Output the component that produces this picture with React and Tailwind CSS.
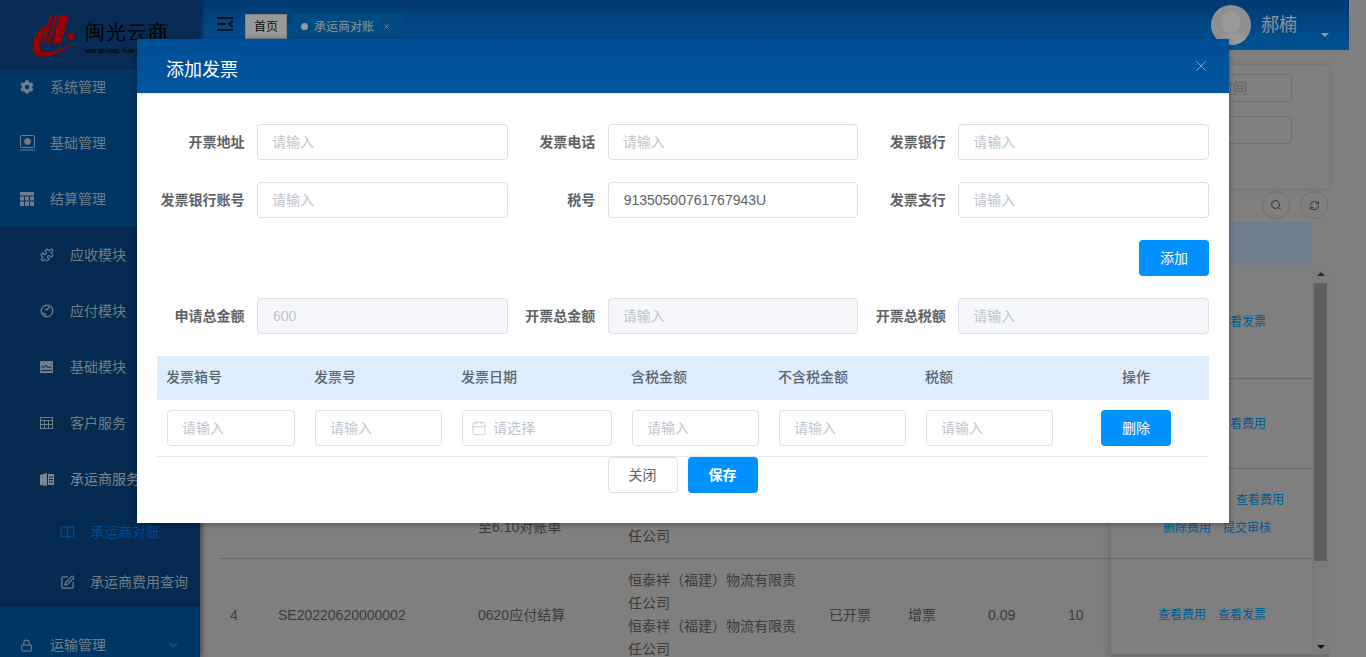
import React from 'react';
import { ChevronDown, Lock, Puzzle, SquarePen, BookOpen, X, Search, RefreshCw, Calendar } from 'lucide-react';
import { FaCog } from 'react-icons/fa';

const font = { fontFamily: '"Liberation Sans", "Noto Sans CJK SC", sans-serif' };

// sidebar glyphs that no package has in this shape
const BaseIcon = () => (
  <svg className="w-[15px] h-[16px]" viewBox="0 0 15 16" fill="none" stroke="currentColor">
    <rect x="0.5" y="0.5" width="14" height="12" rx="1" />
    <circle cx="7.5" cy="6.5" r="3" fill="currentColor" />
    <path d="M0 15h15" />
  </svg>
);
const GridIcon = () => (
  <svg className="w-[14px] h-[14px]" viewBox="0 0 14 14" fill="currentColor">
    <rect width="14" height="3.500" />
    <rect y="4.500" width="4" height="4" />
    <rect x="5" y="4.500" width="4" height="4" />
    <rect x="10" y="4.500" width="4" height="4" />
    <rect y="9.500" width="4" height="4.500" />
    <rect x="5" y="9.500" width="4" height="4.500" />
    <rect x="10" y="9.500" width="4" height="4.500" />
  </svg>
);
const ClockIcon = () => (
  <svg className="w-[14px] h-[14px]" viewBox="0 0 14 14" fill="none" stroke="currentColor" strokeWidth="1.3">
    <circle cx="7" cy="7" r="5.8" />
    <path d="M9.5 2.5 7 6 5 5M2 9l3 1 1 3" />
  </svg>
);
const PictureIcon = () => (
  <svg className="w-[13px] h-[12px]" viewBox="0 0 13 12">
    <rect width="13" height="12" fill="currentColor" />
    <path d="M1.5 6h3l1.5-2 2 3 1-1h2.500" fill="none" stroke="#084685" />
    <path d="M1 9.500h11" stroke="#084685" />
  </svg>
);
const TableIcon = () => (
  <svg className="w-[13px] h-[12px]" viewBox="0 0 13 12" fill="none" stroke="currentColor">
    <rect x="0.500" y="0.500" width="12" height="11" />
    <path d="M0 3.500h13M0 7.500h13M4.500 3.500V12M8.500 3.500V12" />
  </svg>
);
const HalfBookIcon = () => (
  <svg className="w-[14px] h-[13px]" viewBox="0 0 14 13">
    <path d="M0 2 7 0v13l-7-1z" fill="currentColor" />
    <path d="M8 1h6v11H8z" fill="currentColor" />
    <path d="M9 4h4M9 6.500h4M9 9h4" stroke="#084685" />
  </svg>
);

const Logo = () => (
  <div className="h-[70px] bg-[#0d498e] flex items-start pl-[32px] pt-[15px] shrink-0">
    <svg className="w-[44px] h-[44px]" viewBox="0 0 44 44">
      <path d="M18 0h3l-8 28h-3zM23 0h3l-8 28h-3zM28 0h9l-8 28h-9z" fill="#fa0000" />
      <path d="M13 10C3 18-3 32 3 39c6 6 26 2 40-14-12 10-28 15-33 11C6 32 8 22 15 13z" fill="#fa0000" />
      <circle cx="39" cy="21" r="3.500" fill="#fa0000" />
    </svg>
    <div className="ml-[9px] mt-[5px] text-black whitespace-nowrap">
      <div className="text-[20px] leading-[26px] tracking-[1px] font-serif">闽光云商</div>
      <div className="text-[6px] leading-[8px] mt-[1px] font-bold">MIN QUANG YUN SHANG</div>
    </div>
  </div>
);

const SideItem = ({ icon, label, indent = 'pl-[20px]', gap = 'w-[30px]', color = 'text-[#b7d0e1]', h = 'h-[56px]' }) => (
  <div className={`${h} shrink-0 flex items-center ${indent} ${color} text-[14px] whitespace-nowrap`}>
    <span className={`${gap} shrink-0 flex items-center`}>{icon}</span>
    {label}
  </div>
);

const Sidebar = () => (
  <div className="relative w-[200px] shrink-0 h-full flex flex-col bg-[#005aa7] overflow-hidden shadow-[2px_0_5px_rgba(0,20,60,0.5)]" style={font}>
    <Logo />
    <SideItem icon={<FaCog size={14} />} label="系统管理" h="h-[45px] pb-[11px]" />
    <SideItem icon={<BaseIcon />} label="基础管理" />
    <SideItem icon={<GridIcon />} label="结算管理" />
    <div className="bg-[#084685] flex flex-col shrink-0">
      <SideItem icon={<Puzzle size={14} />} label="应收模块" indent="pl-[40px]" />
      <SideItem icon={<ClockIcon />} label="应付模块" indent="pl-[40px]" />
      <SideItem icon={<PictureIcon />} label="基础模块" indent="pl-[40px]" />
      <SideItem icon={<TableIcon />} label="客户服务" indent="pl-[40px]" />
      <SideItem icon={<HalfBookIcon />} label="承运商服务" indent="pl-[40px]" color="text-[#cfe0ea]" />
      <SideItem icon={<BookOpen size={15} />} label="承运商对账" indent="pl-[60px]" color="text-[#0080f0]" h="h-[50px]" />
      <SideItem icon={<SquarePen size={15} />} label="承运商费用查询" indent="pl-[60px]" h="h-[50px]" />
    </div>
    <div className="h-[10px] shrink-0" />
    <div className="h-[56px] shrink-0 flex items-center pl-[20px] text-[#b7d0e1] text-[14px]">
      <span className="w-[30px] shrink-0 flex items-center"><Lock size={13} /></span>
      运输管理
      <ChevronDown size={14} className="ml-auto mr-[20px] opacity-40" />
    </div>
  </div>
);

const Header = () => (
  <div className="h-[50px] mr-[17px] shrink-0 bg-gradient-to-b from-[#0060c0] to-[#008df8] flex items-start pl-[17px] text-[12px]" style={font}>
    <svg className="w-[16px] h-[14px] mt-[17px] text-black" viewBox="0 0 16 14" fill="none" stroke="currentColor" strokeWidth="1.600">
      <path d="M0 1h16M0 7h9M0 13h16M16 4l-4 3 4 3" />
    </svg>
    <div className="ml-[12px] mt-[14px] w-[42px] h-[25px] border border-[#ddd] bg-white flex items-center justify-center text-[#222]">首页</div>
    <div className="ml-[5px] mt-[14px] w-[111px] h-[25px] bg-[#007dd8] flex items-center pl-[9px] text-[#e6f0f5]">
      <span className="w-[7px] h-[7px] rounded-full bg-white mr-[6px]" />
      承运商对账
      <X size={7} className="ml-[9px]" strokeWidth={3} />
    </div>
    <div className="ml-auto mr-[98px] mt-[5px] w-[40px] h-[40px] rounded-full bg-[#f0f0f0] overflow-hidden relative">
      <div className="absolute left-[11px] top-[6px] w-[18px] h-[22px] rounded-full bg-white" />
      <div className="absolute left-[3px] top-[29px] w-[34px] h-[20px] rounded-full bg-white" />
    </div>
  </div>
);

const columns = 'grid-cols-[58px_200px_150px_201px_79px_80px_80px_43px_201px]';

const Rows = [
  { h: 'h-[114px]', right: <div className="pl-[107px]">查看发票</div> },
  { h: 'h-[90px]', right: <div className="pl-[107px]">查看费用</div> },
  {
    h: 'h-[90px]',
    mid: ['2022.6.1', '至6.10对账单'],
    company: ['恒泰祥（福建）物流有限责', '恒泰祥（福建）', '任公司'],
    right: (
      <div className="flex flex-col items-end pr-[41px] gap-[10px]">
        <span className="translate-x-[13px]">查看费用</span>
        <span className="flex gap-[12px]"><span>删除费用</span><span>提交审核</span></span>
      </div>
    ),
  },
];

const Content = () => (
  <div className="flex-1 min-w-0 relative pl-[20px] pr-[37px] text-[14px] text-[#666]" style={font}>
    {/* search card */}
    <div className="mt-[15px] h-[123px] rounded shadow-[0_0_6px_rgba(0,0,0,0.15)] flex flex-col items-end pt-[9px] pr-[37px] gap-[14px]">
      <div className="w-[120px] h-[28px] border border-[#b8b8b8] rounded flex items-center pl-[46px] text-[#a8a8a8]">时间</div>
      <div className="w-[120px] h-[28px] border border-[#b8b8b8] rounded" />
    </div>
    <div className="h-[34px] flex items-center justify-end gap-[10px] pr-[1px]">
      <span className="w-[28px] h-[28px] rounded-full border border-[#b8b8b8] flex items-center justify-center text-[#555]"><Search size={12} /></span>
      <span className="w-[28px] h-[28px] rounded-full border border-[#b8b8b8] flex items-center justify-center text-[#555]"><RefreshCw size={11} /></span>
    </div>
    {/* table */}
    <div className="h-[43px] mr-[17px] bg-[#b7d0e9]" />
    <div className="flex h-[392px] overflow-hidden relative">
      <div className="flex-1 min-w-0">
        {Rows.map((r, i) => (
          <div key={i} className={`${r.h} grid ${columns} items-center border-b border-[#afafaf]`}>
            <span /><span />
            <div className="leading-[26px]">{r.mid && r.mid.map((t) => <div key={t}>{t}</div>)}</div>
            <div className="leading-[23px]">{r.company && r.company.map((t) => <div key={t}>{t}</div>)}</div>
            <span /><span /><span /><span />
            <div className="text-[12px] text-[#0099f0]">{r.right}</div>
          </div>
        ))}
        <div className={`h-[112px] grid ${columns} items-center`}>
          <span className="pl-[10px]">4</span>
          <span>SE20220620000002</span>
          <span>0620应付结算</span>
          <div className="leading-[23px] pr-[20px]">
            <div>恒泰祥（福建）物流有限责任公司</div>
            <div>恒泰祥（福建）物流有限责任公司</div>
          </div>
          <span>已开票</span>
          <span>增票</span>
          <span>0.09</span>
          <span>10</span>
          <div className="text-[12px] text-[#0099f0] pl-[47px] flex gap-[12px]"><span>查看费用</span><span>查看发票</span></div>
        </div>
      </div>
      <div className="w-[17px] shrink-0 bg-[#d0d0d0] flex flex-col items-center">
        <span className="mt-[7px] w-0 h-0 border-x-[4px] border-x-transparent border-b-[4px] border-b-[#444]" />
        <div className="w-[13px] h-[278px] mt-[7px] bg-[#9e9e9e]" />
        <span className="mt-auto mb-[8px] w-0 h-0 border-x-[4px] border-x-transparent border-t-[4px] border-t-[#222]" />
      </div>
      <div className="absolute right-[17px] top-0 bottom-0 w-[201px] shadow-[-3px_0_6px_rgba(0,0,0,0.12)]" />
      <div className="absolute right-0 bottom-0 w-[218px] h-[3px] bg-[#bbb]" />
    </div>
  </div>
);

const Field = ({ label, value, placeholder = '请输入', disabled }) => (
  <div className="flex items-center h-[36px]">
    <label className="w-[100px] shrink-0 pr-[12.5px] text-right text-[14px] font-bold text-[#606266] whitespace-nowrap">{label}</label>
    <input
      readOnly
      disabled={disabled}
      value={value || ''}
      placeholder={placeholder}
      className={`w-full h-[36px] ${value ? 'px-[15px]' : 'px-[14px]'} text-[14px] rounded border border-[#dcdfe6] outline-none placeholder:text-[#c0c4cc] ${
        disabled ? 'bg-[#f5f7fa] text-[#c0c4cc]' : 'bg-white text-[#606266]'
      }`}
      style={font}
    />
  </div>
);

const CellInput = ({ placeholder = '请输入' }) => (
  <input
    readOnly
    placeholder={placeholder}
    className="w-full h-[36px] px-[14px] text-[14px] rounded border border-[#dcdfe6] outline-none bg-white placeholder:text-[#c0c4cc]"
    style={font}
  />
);

const Modal = () => (
  <div className="w-[1092px] h-[484px] mt-[39px] mx-auto bg-white shadow-[0_1px_6px_rgba(0,0,0,0.35)] flex flex-col" style={font}>
    <div className="h-[55px] shrink-0 bg-gradient-to-b from-[#004e97] to-[#00569e] border-b border-[#e4e7ed] flex items-center pl-[29px] pr-[19px] text-white">
      <span className="text-[18px] mt-[8px]">添加发票</span>
      <X size={18} strokeWidth={1.1} className="ml-auto text-[#a8bccc]" />
    </div>
    <div className="pl-[20px] pr-[20px] pt-[30px]">
      <div className="grid grid-cols-3 gap-y-[22px]">
        <Field label="开票地址" />
        <Field label="发票电话" />
        <Field label="发票银行" />
        <Field label="发票银行账号" />
        <Field label="税号" value="91350500761767943U" />
        <Field label="发票支行" />
      </div>
      <div className="flex justify-end mt-[22px]">
        <button className="w-[70px] h-[36px] rounded bg-[#0091ff] text-white text-[14px]">添加</button>
      </div>
      <div className="grid grid-cols-3 mt-[22px]">
        <Field label="申请总金额" value="600" disabled />
        <Field label="开票总金额" disabled />
        <Field label="开票总税额" disabled />
      </div>
      {/* invoice table */}
      <div className="mt-[22px] grid grid-cols-[148px_147px_170px_147px_147px_147px_146px] h-[44px] items-center bg-[#deeefe] border-b border-[#e4e7ed] text-[14px] font-medium text-[#5a6672]">
        {['发票箱号', '发票号', '发票日期', '含税金额', '不含税金额', '税额'].map((t) => (
          <span key={t} className="pl-[9px]">{t}</span>
        ))}
        <span className="text-center">操作</span>
      </div>
      <div className="grid grid-cols-[148px_147px_170px_147px_147px_147px_146px] h-[57px] items-center border-b border-[#e4e7ed]">
        <div className="px-[10px]"><CellInput /></div>
        <div className="px-[10px]"><CellInput /></div>
        <div className="px-[10px] relative">
          <Calendar size={16} strokeWidth={1.2} className="absolute left-[19px] top-[10px] text-[#c0c4cc]" />
          <input
            readOnly
            placeholder="请选择"
            className="w-full h-[36px] pl-[30px] pr-[15px] text-[14px] rounded border border-[#dcdfe6] outline-none bg-white placeholder:text-[#c0c4cc]"
            style={font}
          />
        </div>
        <div className="px-[10px]"><CellInput /></div>
        <div className="px-[10px]"><CellInput /></div>
        <div className="px-[10px]"><CellInput /></div>
        <div className="flex justify-center">
          <button className="w-[70px] h-[36px] rounded bg-[#0091ff] text-white text-[14px]">删除</button>
        </div>
      </div>
      <div className="flex justify-center gap-[10px] pr-[1px]">
        <button className="w-[70px] h-[36px] rounded border border-[#dcdfe6] bg-white text-[#606266] text-[14px]">关闭</button>
        <button className="w-[70px] h-[36px] rounded bg-[#0091ff] text-white text-[14px] font-bold">保存</button>
      </div>
    </div>
  </div>
);

const App = () => (
  <div className="relative w-[1366px] h-[657px] overflow-hidden bg-[#d4d4d4] flex">
    <Sidebar />
    <div className="flex-1 min-w-0 flex flex-col">
      <Header />
      <Content />
    </div>
    {/* user name and caret sit on the header */}
    <div className="absolute left-[1261px] top-[12px] text-[18px] text-[#eef2ff]" style={font}>郝楠</div>
    <span className="absolute left-[1321px] top-[33px] w-0 h-0 border-x-[4px] border-x-transparent border-t-[4px] border-t-white" />
    <div className="absolute inset-0 z-20 bg-black/40">
      <Modal />
    </div>
  </div>
);

export default App;
